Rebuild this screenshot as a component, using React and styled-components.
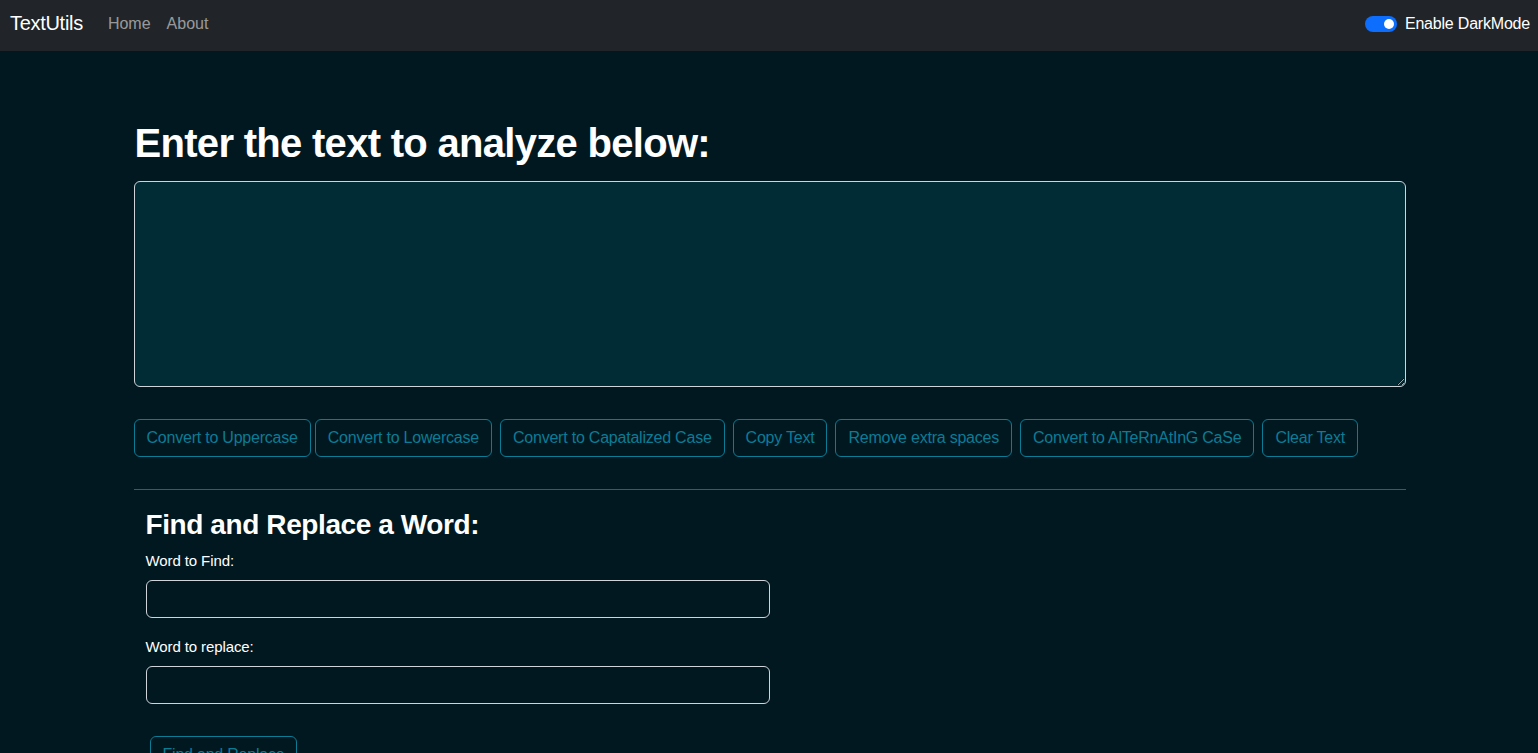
import React, { useState } from "react";
import styled, { createGlobalStyle } from "styled-components";

const GlobalStyle = createGlobalStyle`
  * { box-sizing: border-box; }
  body {
    margin: 0;
    background: #011820;
    font-family: "Segoe UI", "Liberation Sans", Arial, sans-serif;
    color: #fff;
  }
`;

const buttons = [
  "Convert to Uppercase",
  "Convert to Lowercase",
  "Convert to Capatalized Case",
  "Copy Text",
  "Remove extra spaces",
  "Convert to AlTeRnAtInG CaSe",
  "Clear Text",
];

export default function App() {
  const [dark, setDark] = useState(true);
  const [text, setText] = useState("");

  return (
    <>
      <GlobalStyle />
      <Navbar>
        <Brand>TextUtils</Brand>
        <NavLinks>
          <NavLink>Home</NavLink>
          <NavLink>About</NavLink>
        </NavLinks>
        <SwitchWrap onClick={() => setDark(!dark)}>
          <Switch on={dark}>
            <Knob />
          </Switch>
          <SwitchLabel>Enable DarkMode</SwitchLabel>
        </SwitchWrap>
      </Navbar>

      <Main>
        <Title>Enter the text to analyze below:</Title>
        <TextBox value={text} onChange={(e) => setText(e.target.value)} />

        <ButtonRow>
          {buttons.map((b) => (
            <OutlineButton key={b}>{b}</OutlineButton>
          ))}
        </ButtonRow>

        <Divider />

        <Section>
          <SubTitle>Find and Replace a Word:</SubTitle>
          <Label>Word to Find:</Label>
          <Input />
          <Label>Word to replace:</Label>
          <Input />
          <ReplaceButton>Find and Replace</ReplaceButton>
        </Section>
      </Main>
    </>
  );
}

/* ---------- styled ---------- */

const Navbar = styled.nav`
  height: 51px;
  background: #212529;
  display: flex;
  align-items: center;
  padding: 0 8px 4px 10px;
`;

const Brand = styled.div`
  font-size: 20px;
  color: #fff;
  letter-spacing: -0.3px;
  margin-right: 25px;
`;

const NavLinks = styled.div`
  display: flex;
  gap: 16px;
  flex: 1;
`;

const NavLink = styled.a`
  font-size: 16px;
  color: rgba(255, 255, 255, 0.55);
  cursor: pointer;
`;

const SwitchWrap = styled.label`
  display: flex;
  align-items: center;
  gap: 8px;
  cursor: pointer;
`;

const Switch = styled.span`
  width: 32px;
  height: 16px;
  border-radius: 8px;
  background: ${({ on }) => (on ? "#0d6efd" : "#555")};
  display: flex;
  align-items: center;
  padding: 0 3px;
  justify-content: ${({ on }) => (on ? "flex-end" : "flex-start")};
`;

const Knob = styled.span`
  width: 10px;
  height: 10px;
  border-radius: 50%;
  background: #fff;
`;

const SwitchLabel = styled.span`
  font-size: 16px;
  letter-spacing: -0.2px;
  color: #fff;
`;

const Main = styled.main`
  width: 1273px;
  margin: 0 auto;
  padding: 68px 0 0 1px;
`;

const Title = styled.h1`
  font-size: 40px;
  font-weight: 600;
  letter-spacing: -0.7px;
  line-height: 1.2;
  margin: 0 0 14px 1px;
`;

const TextBox = styled.textarea`
  display: block;
  width: 100%;
  height: 206px;
  background: #012c36;
  border: 1px solid #ced4da;
  border-radius: 6px;
  color: #fff;
  padding: 6px 12px;
  font-family: inherit;
  font-size: 16px;
  outline: none;
`;

const ButtonRow = styled.div`
  display: flex;
  flex-wrap: wrap;
  gap: 8px;
  margin-top: 32px;

  & > :first-child {
    margin-right: -4px;
  }
`;

const OutlineButton = styled.button`
  height: 38px;
  padding: 0 12px;
  background: transparent;
  border: 1px solid #0b7c96;
  border-radius: 6px;
  color: #0b7c96;
  font-family: inherit;
  font-size: 16px;
  letter-spacing: -0.22px;
  cursor: pointer;
`;

const Divider = styled.hr`
  border: none;
  border-top: 1px solid #4b5558;
  margin: 32px 0 0;
`;

const Section = styled.div`
  padding: 18px 12px 0;
  display: flex;
  flex-direction: column;
  align-items: flex-start;
`;

const SubTitle = styled.h3`
  font-size: 28px;
  font-weight: 600;
  letter-spacing: -0.4px;
  line-height: 1.2;
  margin: 0 0 10px;
`;

const Label = styled.label`
  font-size: 15px;
  letter-spacing: -0.1px;
  margin-bottom: 11px;
`;

const Input = styled.input`
  width: 624px;
  height: 38px;
  background: transparent;
  border: 1px solid #ced4da;
  border-radius: 6px;
  color: #fff;
  margin-bottom: 20px;
  padding: 6px 12px;
  font-family: inherit;
  font-size: 16px;
  outline: none;
`;

const ReplaceButton = styled(OutlineButton)`
  margin: 12px 0 0 4px;
`;
